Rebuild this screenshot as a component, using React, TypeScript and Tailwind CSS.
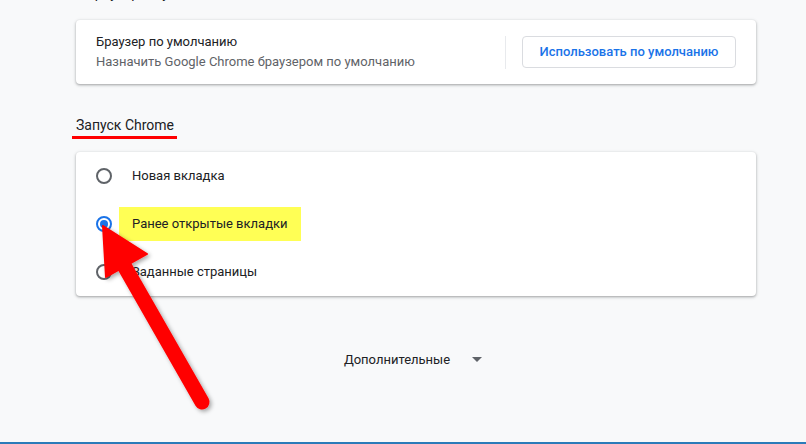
import React from 'react';

const Radio: React.FC<{ checked?: boolean }> = ({ checked }) => (
    <span
        className={
            checked
                ? 'flex h-4 w-4 shrink-0 items-center justify-center rounded-full border-2 border-[#1a73e8]'
                : 'flex h-4 w-4 shrink-0 items-center justify-center rounded-full border-2 border-[#5f6368]'
        }
    >
        {checked && <span className="h-2 w-2 rounded-full bg-[#1a73e8]" />}
    </span>
);

const cardShadow = 'shadow-[0_1px_2px_rgba(60,64,67,0.3),0_1px_3px_1px_rgba(60,64,67,0.15)]';

export default function App() {
    return (
        <div
            className="relative h-[444px] w-full overflow-hidden border-b-2 border-[#2b7bb9] bg-[#f8f9fa] text-[13px] text-[#202124]"
            style={{ fontFamily: 'Roboto, "Noto Sans", sans-serif' }}
        >
            <div className="ml-[76px] w-[680px]">
                {/* heading cut off by the top edge */}
                <div className="h-5 overflow-hidden">
                    <div className="-mt-[17px] ml-[10px] text-[14px] text-[#202124]">Браузер по умолчанию</div>
                </div>

                <div className={`flex h-16 items-center rounded bg-white pl-5 pr-5 ${cardShadow}`}>
                    <div className="flex-1">
                        <div className="leading-5">Браузер по умолчанию</div>
                        <div className="leading-5 text-[#5f6368]">Назначить Google Chrome браузером по умолчанию</div>
                    </div>
                    <div className="h-[33px] w-px bg-[#e8eaed]" />
                    <button className="ml-4 h-8 w-[214px] rounded border border-[#dadce0] bg-white font-medium text-[#1a73e8]">
                        Использовать по умолчанию
                    </button>
                </div>

                <div className="flex h-[68px] items-end pb-[17px]">
                    <div className="relative">
                        <span className="text-[14px] leading-5">Запуск Chrome</span>
                        <div className="absolute -left-1 right-[-3px] top-[21px] h-[3px] bg-[#ff0000]" />
                    </div>
                </div>

                <div className={`rounded bg-white ${cardShadow}`}>
                    <div className="flex h-12 items-center pl-5">
                        <Radio />
                        <span className="ml-5">Новая вкладка</span>
                    </div>
                    <div className="flex h-12 items-center pl-5">
                        <Radio checked />
                        <span className="ml-[7px] flex h-[34px] items-center bg-[#ffff55] px-[13px]">Ранее открытые вкладки</span>
                    </div>
                    <div className="flex h-12 items-center pl-5">
                        <Radio />
                        <span className="ml-5">Заданные страницы</span>
                    </div>
                </div>

                <div className="mt-[54px] flex items-center justify-center gap-[22px] pr-[6px]">
                    <span>Дополнительные</span>
                    <svg width="10" height="5" viewBox="0 0 10 5">
                        <path d="M0 0h10L5 5z" fill="#5f6368" />
                    </svg>
                </div>
            </div>

            {/* red arrow annotation */}
            <svg className="pointer-events-none absolute inset-0" width="806" height="444">
                <defs>
                    <filter id="sh" x="-20%" y="-20%" width="140%" height="140%">
                        <feDropShadow dx="2" dy="2" stdDeviation="2" floodColor="#000" floodOpacity="0.35" />
                    </filter>
                </defs>
                <g filter="url(#sh)" fill="#ff0000" stroke="#ff0000">
                    <line x1="122" y1="262" x2="202" y2="402" strokeWidth="15" strokeLinecap="round" />
                    <polygon points="103,226 147,254 106,277" strokeWidth="2" strokeLinejoin="round" />
                </g>
            </svg>
        </div>
    );
}
